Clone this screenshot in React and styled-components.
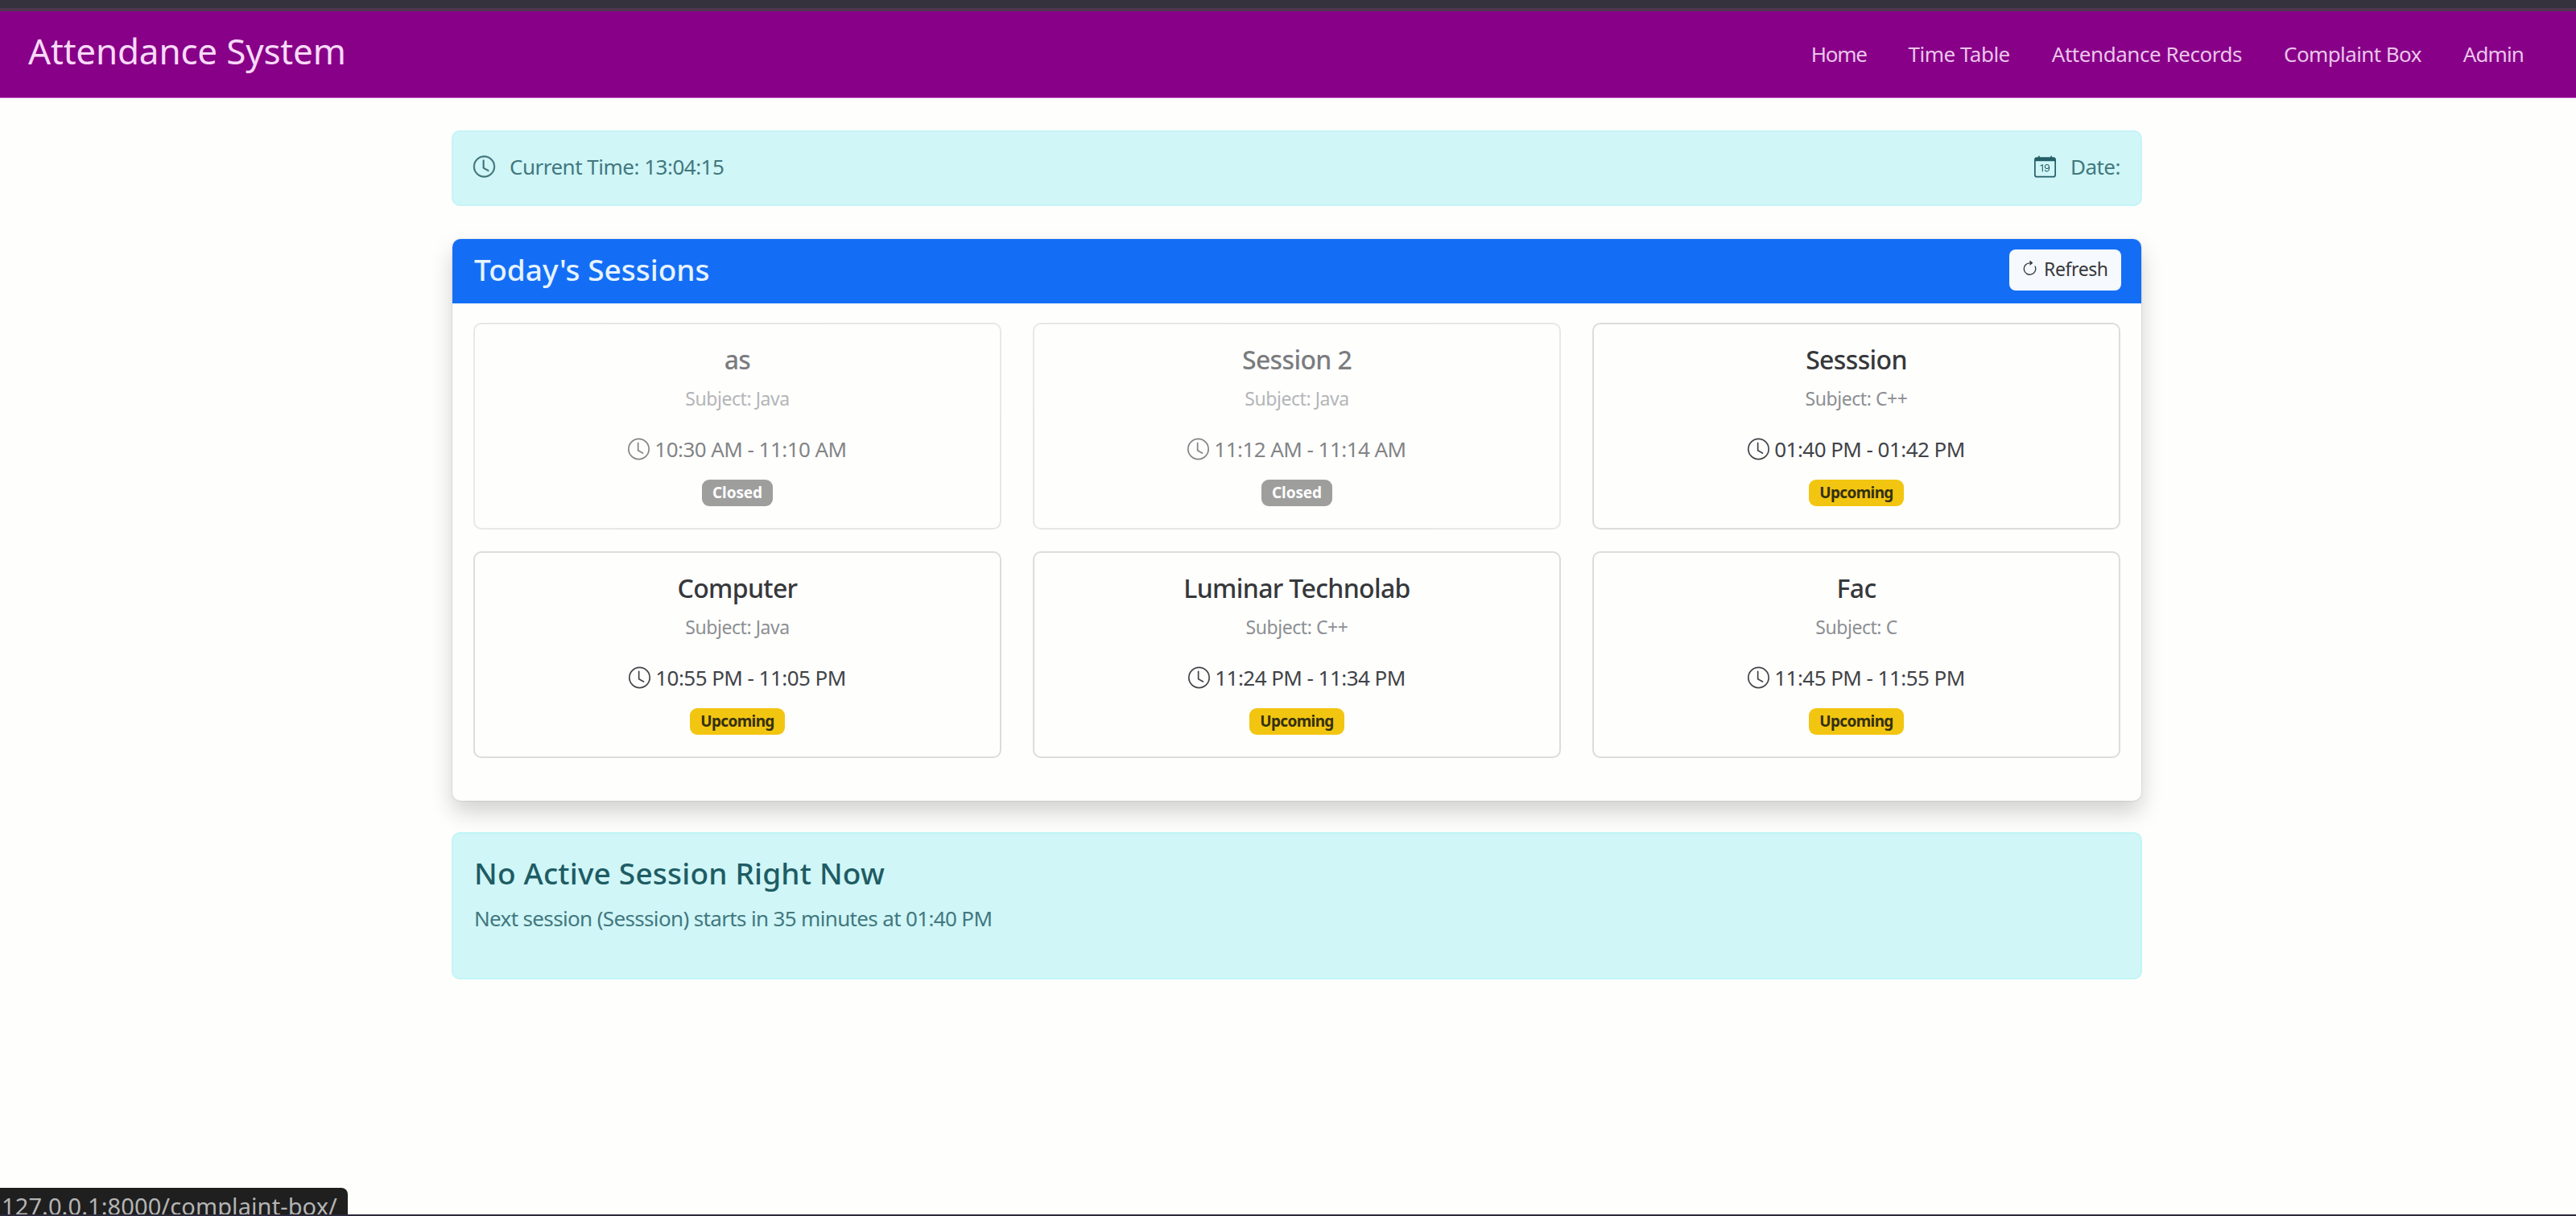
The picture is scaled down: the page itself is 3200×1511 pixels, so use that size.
import React from 'react';
import styled, { createGlobalStyle } from 'styled-components';
import { BsClock, BsCalendarDate, BsArrowClockwise } from 'react-icons/bs';

const links = [
  { label: 'Home', tracking: -1.3 },
  { label: 'Time Table', tracking: -0.5 },
  { label: 'Attendance Records', tracking: -0.45 },
  { label: 'Complaint Box', tracking: -0.6 },
  { label: 'Admin', tracking: -0.9 },
];

const sessions = [
  { name: 'as', subject: 'Java', time: '10:30 AM - 11:10 AM', status: 'Closed' },
  { name: 'Session 2', subject: 'Java', time: '11:12 AM - 11:14 AM', status: 'Closed' },
  { name: 'Sesssion', subject: 'C++', time: '01:40 PM - 01:42 PM', status: 'Upcoming' },
  { name: 'Computer', subject: 'Java', time: '10:55 PM - 11:05 PM', status: 'Upcoming' },
  { name: 'Luminar Technolab', subject: 'C++', time: '11:24 PM - 11:34 PM', status: 'Upcoming' },
  { name: 'Fac', subject: 'C', time: '11:45 PM - 11:55 PM', status: 'Upcoming' },
];

function App() {
  return (
    <Page>
      <GlobalStyle />
      <WindowEdge />
      <Navbar>
        <Brand>Attendance System</Brand>
        <Nav>
          {links.map((link) => (
            <NavItem key={link.label} $tracking={link.tracking}>
              {link.label}
            </NavItem>
          ))}
        </Nav>
      </Navbar>

      <Container>
        <TimeBar>
          <TimeItem>
            <BsClock />
            <span>Current Time: 13:04:15</span>
          </TimeItem>
          <TimeItem $dark>
            <BsCalendarDate />
            <span>Date:</span>
          </TimeItem>
        </TimeBar>

        <Card>
          <CardHeader>
            <CardTitle>Today's Sessions</CardTitle>
            <RefreshButton>
              <BsArrowClockwise />
              Refresh
            </RefreshButton>
          </CardHeader>
          <SessionGrid>
            {sessions.map((session) => (
              <SessionCard key={session.name} $closed={session.status === 'Closed'}>
                <SessionName>{session.name}</SessionName>
                <Subject>Subject: {session.subject}</Subject>
                <SessionTime>
                  <BsClock />
                  <span>{session.time}</span>
                </SessionTime>
                <Badge $closed={session.status === 'Closed'}>{session.status}</Badge>
              </SessionCard>
            ))}
          </SessionGrid>
        </Card>

        <ActiveSession>
          <h4>No Active Session Right Now</h4>
          <p>Next session (Sesssion) starts in 35 minutes at 01:40 PM</p>
        </ActiveSession>
      </Container>

      <StatusBubble>127.0.0.1:8000/complaint-box/</StatusBubble>
    </Page>
  );
}

const GlobalStyle = createGlobalStyle`
  * {
    box-sizing: border-box;
  }

  body {
    margin: 0;
    background: #fefefd;
    overflow: hidden;
  }

  h4, h5, p {
    margin: 0;
  }
`;

const Page = styled.div`
  position: relative;
  height: 1511px;
  overflow: hidden;
  border-bottom: 2px solid #2b2a3a;
  background: #fefefd;
  font-family: 'Noto Sans', 'Open Sans', sans-serif;
  font-size: 26px;
  color: #36383b;
`;

const WindowEdge = styled.div`
  height: 14px;
  background: #36323d;
  border-bottom: 4px solid #4e364f;
`;

const Navbar = styled.nav`
  display: flex;
  justify-content: space-between;
  height: 108px;
  padding: 0 65px 0 35px;
  background: #870087;
  border-bottom: 1px solid #c860c8;
`;

const Brand = styled.div`
  padding-top: 18px;
  color: #f9d9f9;
  font-size: 44px;
  line-height: 62px;
  letter-spacing: -0.18px;
`;

const Nav = styled.div`
  display: flex;
  gap: 52px;
  padding-top: 35px;
`;

const NavItem = styled.a`
  color: #ecc4ec;
  line-height: 36px;
  letter-spacing: ${(props) => props.$tracking}px;
  white-space: nowrap;
`;

const Container = styled.main`
  width: 2100px;
  margin: 40px 0 0 561px;
`;

const TimeBar = styled.div`
  display: flex;
  justify-content: space-between;
  height: 94px;
  padding: 25px 25px 0;
  border: 2px solid #c6f4f6;
  border-radius: 10px;
  background: #d0f6f7;
  color: #42787f;
`;

const TimeItem = styled.div`
  display: flex;
  height: 36px;
  align-items: center;
  gap: 18px;
  letter-spacing: -0.5px;
  white-space: nowrap;

  svg {
    width: 27px;
    height: 28px;
    color: ${(props) => (props.$dark ? '#235f67' : '#3f7279')};
    stroke: currentColor;
    stroke-width: ${(props) => (props.$dark ? 0 : '0.25px')};
    overflow: visible;
  }
`;

const Card = styled.section`
  width: 2098px;
  height: 698px;
  margin: 41px 0 39px 1px;
  border-radius: 10px;
  background: #fefefd;
  box-shadow: 0 14px 28px rgba(0, 0, 0, 0.18), 0 0 2px rgba(0, 0, 0, 0.2);
`;

const CardHeader = styled.div`
  display: flex;
  justify-content: space-between;
  height: 80px;
  padding: 13px 25px 0 27px;
  border-radius: 10px 10px 0 0;
  background: #146ef5;
`;

const CardTitle = styled.h5`
  color: #e6f3ff;
  font-size: 37px;
  font-weight: 500;
  line-height: 49px;
`;

const RefreshButton = styled.button`
  display: flex;
  align-items: center;
  gap: 7px;
  width: 139px;
  height: 51px;
  padding: 0 15px 4px;
  border: 0;
  border-radius: 8px;
  background: #f6f9fd;
  color: #36383b;
  font: inherit;
  font-size: 23px;
  letter-spacing: -0.4px;

  svg {
    width: 21px;
    height: 22px;
    flex-shrink: 0;
  }
`;

const SessionGrid = styled.div`
  display: grid;
  grid-template-columns: repeat(3, 656px);
  gap: 27px 39px;
  padding: 24px 26px;
`;

const SessionCard = styled.article`
  display: flex;
  flex-direction: column;
  align-items: center;
  height: 257px;
  padding-top: 22px;
  border: 2px solid #dcdcdc;
  border-radius: 10px;
  opacity: ${(props) => (props.$closed ? 0.65 : 1)};
`;

const SessionName = styled.h5`
  font-size: 32px;
  font-weight: 500;
  line-height: 44px;
  letter-spacing: -0.65px;
`;

const Subject = styled.p`
  margin-top: 10px;
  color: #8d8f92;
  font-size: 23px;
  line-height: 32px;
  letter-spacing: -0.45px;
`;

const SessionTime = styled.div`
  display: flex;
  align-items: center;
  gap: 6px;
  height: 36px;
  margin-top: 29px;
  color: #414347;
  letter-spacing: -0.55px;

  svg {
    width: 27px;
    height: 28px;
  }
`;

const Badge = styled.span`
  height: 33px;
  margin-top: 20px;
  padding: 0 13px;
  border-radius: 9px;
  background: ${(props) => (props.$closed ? '#6b6b6b' : '#f2c511')};
  color: ${(props) => (props.$closed ? '#fff' : '#33300f')};
  font-size: 19px;
  font-weight: 700;
  line-height: 32px;
  letter-spacing: ${(props) => (props.$closed ? '-0.1px' : '-0.65px')};
`;

const ActiveSession = styled.div`
  height: 183px;
  padding: 24px 26px;
  border: 2px solid #c2f5f5;
  border-radius: 10px;
  background: #d0f6f7;
  color: #42787f;

  h4 {
    color: #1e5c64;
    font-size: 37px;
    font-weight: 500;
    line-height: 50px;
    letter-spacing: 0.2px;
  }

  p {
    margin-top: 13px;
    line-height: 36px;
    letter-spacing: -0.65px;
  }
`;

/* link preview the browser shows over the page */
const StatusBubble = styled.div`
  position: absolute;
  left: 0;
  bottom: 0;
  width: 432px;
  height: 33px;
  padding-left: 2px;
  border-radius: 0 8px 0 0;
  background: #1f1f1f;
  color: #b4b4b4;
  font-size: 29px;
  line-height: 46px;
  letter-spacing: 0.1px;
  white-space: nowrap;
  overflow: hidden;
`;

export default App;
